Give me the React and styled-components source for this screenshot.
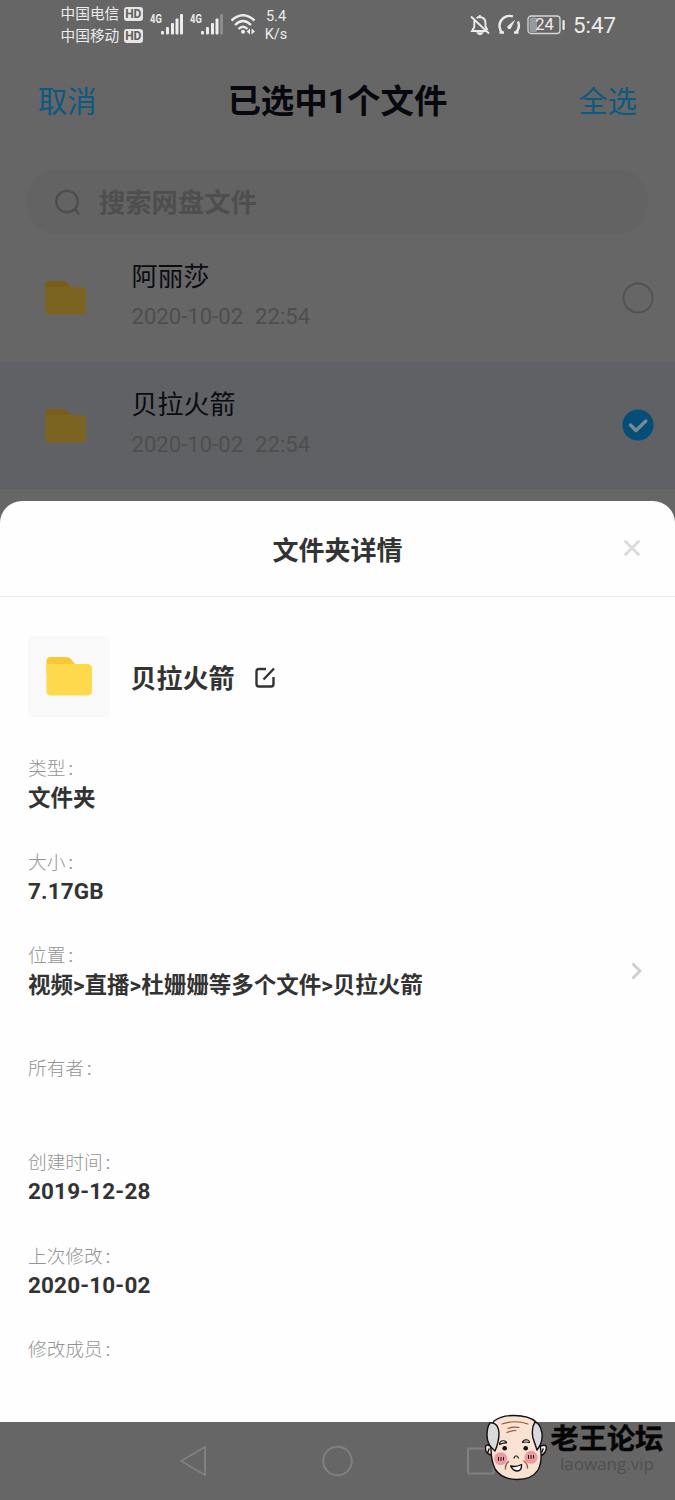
import React from 'react'
import styled, { createGlobalStyle } from 'styled-components';

const GlobalStyle = createGlobalStyle`
    * {
        box-sizing: border-box;
    }
    body {
        margin: 0;
        background: #666;
        font-family: Roboto, 'Noto Sans CJK SC', sans-serif;
    }
    svg {
        display: block;
        flex-shrink: 0;
    }
`

const files = [
    { name: '阿丽莎', date: '2020-10-02', time: '22:54', selected: false },
    { name: '贝拉火箭', date: '2020-10-02', time: '22:54', selected: true },
]

const details = [
    { label: '类型', value: '文件夹' },
    { label: '大小', value: '7.17GB', latin: true },
    { label: '位置', value: '视频>直播>杜姗姗等多个文件>贝拉火箭', height: 113, link: true },
    { label: '所有者', value: '' },
    { label: '创建时间', value: '2019-12-28', latin: true },
    { label: '上次修改', value: '2020-10-02', latin: true },
    { label: '修改成员', value: '' },
]

const Screen = styled.div`
    position: relative;
    display: flex;
    flex-direction: column;
    width: 675px;
    height: 1500px;
    overflow: hidden;
    background: #666;
`

const StatusBar = styled.div`
    display: flex;
    justify-content: space-between;
    height: 50px;
    padding: 0 60px 0 60.5px;
    color: #ececec;
`
const StatusGroup = styled.div`
    display: flex;
    align-items: center;
    height: 50px;
`
const StatusIcons = styled.div`
    display: flex;
    align-items: center;
    gap: 6px;
`
const Carriers = styled.div`
    display: flex;
    flex-direction: column;
    width: 89px;
`
const Carrier = styled.div`
    display: flex;
    align-items: center;
    gap: 4.5px;
    height: 22px;
    font-size: 14.7px;
    line-height: 22px;
    white-space: nowrap;
`
const HdBadge = styled.span`
    width: 19px;
    height: 14px;
    border-radius: 3px;
    background: #e6e6e6;
    color: #606060;
    font-size: 12px;
    font-weight: 700;
    line-height: 14.5px;
    text-align: center;
`
const Network = styled.div`
    display: flex;
    width: 40.5px;
    height: 22px;
`
const NetworkType = styled.span`
    width: 11px;
    font-size: 12.5px;
    font-weight: 700;
    line-height: 9px;
    transform: scaleX(0.75);
    transform-origin: left;
`
const Speed = styled.div`
    width: 30px;
    margin-left: 3.5px;
    padding-top: 2px;
    font-size: 14.5px;
    line-height: 18px;
    text-align: center;
`
const Clock = styled.div`
    width: 42px;
    margin-left: 8px;
    font-size: 22.3px;
    line-height: 50px;
    white-space: nowrap;
`

const TopBar = styled.div`
    display: flex;
    align-items: center;
    justify-content: space-between;
    height: 100px;
    padding: 4px 38px 0;
`
const TopAction = styled.button`
    padding: 0;
    border: none;
    background: none;
    color: #0e5980;
    font-family: inherit;
    font-size: 29.3px;
    line-height: 40px;
    cursor: pointer;
`
const TopTitle = styled.h1`
    margin: 0;
    color: #07080d;
    font-size: 33.5px;
    font-weight: 700;
    line-height: 48px;
`

const SearchBox = styled.div`
    display: flex;
    align-items: center;
    height: 64px;
    margin: 20px 27px 0;
    padding-left: 27px;
    border-radius: 30px;
    background: #636363;
    color: #4e4e4e;
`
const SearchText = styled.span`
    margin-left: 18px;
    padding-top: 2px;
    font-size: 26.3px;
    font-weight: 600;
    line-height: 38px;
`

const FileRow = styled.div`
    display: flex;
    align-items: center;
    height: 127.5px;
    padding: 0 21.5px 0 45px;
    background: ${props => props.$selected ? '#5f6164' : 'transparent'};
`
const FileText = styled.div`
    flex: 1;
    padding: 0 0 2px 45.5px;
`
const FileName = styled.div`
    color: #0b0c11;
    font-size: 26px;
    line-height: 40px;
`
const FileDate = styled.div`
    display: flex;
    gap: 12px;
    color: #4e4e4e;
    font-size: 22.1px;
    line-height: 39px;
`

const Sheet = styled.div`
    position: absolute;
    top: 500.5px;
    left: 0;
    width: 675px;
    height: 921.5px;
    border-radius: 22px 22px 0 0;
    background: #fefefe;
`
const SheetHeader = styled.div`
    display: grid;
    grid-template-columns: 1fr auto 1fr;
    align-items: center;
    height: 96.5px;
    padding: 0 34px;
    border-bottom: 1px solid #ebebeb;
`
const SheetTitle = styled.h2`
    grid-column: 2;
    margin: 0;
    padding-top: 5px;
    color: #333;
    font-size: 26px;
    font-weight: 700;
    line-height: 38px;
`
const CloseButton = styled.button`
    justify-self: end;
    padding: 0;
    border: none;
    background: none;
    cursor: pointer;
`
const FolderRow = styled.div`
    display: flex;
    align-items: center;
    padding: 39px 28px 0;
`
const Thumb = styled.div`
    display: flex;
    align-items: center;
    justify-content: center;
    width: 82px;
    height: 81px;
    padding-bottom: 1px;
    border-radius: 5px;
    background: #f9f9f9;
`
const FolderName = styled.div`
    margin: 0 20.5px;
    padding-top: 4px;
    color: #333;
    font-size: 26px;
    font-weight: 700;
    line-height: 38px;
`
const Details = styled.div`
    padding: 38px 28px 0;
`
const Detail = styled.div`
    display: flex;
    justify-content: space-between;
    height: ${props => props.$height || 93.7}px;
    padding-right: 4px;
`
const Label = styled.div`
    color: #949494;
    font-size: 18.7px;
    font-weight: 300;
    line-height: 29px;
`
const Colon = styled.span`
    margin-left: 3px;
    font-weight: 400;
`
const Value = styled.div`
    color: #333;
    font-size: 22.5px;
    font-weight: 700;
    letter-spacing: ${props => props.$latin ? '0.15px' : 'normal'};
    line-height: ${props => props.$latin ? '27px' : '29px'};
`
const Arrow = styled.div`
    padding-top: 20px;
`

const NavBar = styled.div`
    display: flex;
    align-items: center;
    justify-content: space-between;
    height: 78px;
    margin-top: auto;
    padding: 0 180px 0 179px;
`

const Watermark = styled.div`
    position: absolute;
    top: 1414px;
    left: 483px;
    display: flex;
    width: 190px;
`
const WatermarkText = styled.div`
    padding: 7px 0 0 1.5px;
    white-space: nowrap;
`
const SiteName = styled.div`
    color: #050505;
    font-size: 28.2px;
    font-weight: 700;
    line-height: 38px;
    -webkit-text-stroke: 0.4px #050505;
`
const SiteUrl = styled.div`
    padding-left: 9.5px;
    color: #505050;
    font-family: 'Open Sans', sans-serif;
    font-size: 17px;
    line-height: 10px;
`

const FolderIcon = ({ width, height, tab, body }) => (
    <svg width={width} height={height} viewBox="0 0 46 40" preserveAspectRatio="none">
        <path d="M0.500 5Q0.500 1 5 1H20Q23 1 25 3L28.500 7.500V18H0.500Z" fill={tab} />
        <path d="M0.500 8H41Q46 8 46 12.500V35Q46 39.500 41 39.500H5Q0.500 39.500 0.500 35.500Z" fill={body} />
    </svg>
)

const Signal = ({ weak }) => (
    <svg width="24" height="22" viewBox="0 0 24 22" fill="#ececec">
        <rect x="0" y="17" width="3" height="3.500" rx="1" />
        <rect x="5" y="13" width="3" height="7.500" rx="1" />
        <rect x="10" y="9" width="3" height="11.500" rx="1" />
        <rect x="14.500" y="4.500" width="3" height="16" rx="1" />
        <rect x="19" y="0" width="3" height="20.500" rx="1" fill={weak ? '#8c8c8c' : '#ececec'} />
    </svg>
)

const Wifi = () => (
    <svg width="27" height="22" viewBox="0 0 27 22" fill="none" stroke="#ececec" strokeWidth="2.400">
        <path d="M0.500 6.500Q12 -4 23.500 6.500M4 11Q12 3 20 11M7.500 15Q12 10.500 16.500 15" />
        <circle cx="12" cy="17.800" r="2" fill="#ececec" stroke="none" />
        <path d="M19 14.500V20.500L15.500 17.500ZM20.500 14.500V20.500L24 17.500Z" fill="#ececec" stroke="none" />
    </svg>
)

const BellOff = () => (
    <svg width="21" height="22" viewBox="0 0 21 22" fill="none" stroke="#ececec" strokeWidth="1.900">
        <path d="M4.300 6.500V13L2 17H16.500M6.500 4Q8 3 9.800 3Q15.500 3.500 15.500 9V12.500L17.500 16M9.800 3V1M1 2.500L19 19.500" />
        <path d="M8 19.200Q10 21.500 12 19.200Z" fill="#ececec" />
    </svg>
)

const Gauge = () => (
    <svg width="24" height="22" viewBox="0 0 24 22" fill="none" stroke="#ececec" strokeWidth="2.400">
        <path d="M5.500 19A10 10 0 0 1 16 2.500M21 7.500A10.500 10.500 0 0 1 18.500 19M2.500 18.500H7M17 18.500H21.500" />
        <path d="M18.300 5.500L13.800 14.500A2 2 0 0 1 10.500 12.300Z" fill="#ececec" stroke="none" />
    </svg>
)

const Battery = () => (
    <svg width="38" height="20" viewBox="0 0 38 20">
        <rect x="1" y="1" width="32" height="17.500" rx="3" fill="none" stroke="#d8d8d8" strokeWidth="1.300" />
        <rect x="2.500" y="2.500" width="7.500" height="14.500" rx="1.500" fill="#999" />
        <rect x="35.500" y="5" width="2.200" height="10" rx="1" fill="#ececec" />
        <text x="17.500" y="15" textAnchor="middle" fontSize="16.500" fill="#ececec">24</text>
    </svg>
)

const OldMan = () => (
    <svg width="66" height="68" viewBox="0 0 66 68" fill="none" stroke="#111" strokeWidth="1.400" strokeLinecap="round" strokeLinejoin="round">
        <path d="M9 33Q3 29 2.500 33Q2 41 10 41M6 35L5 38M56 33Q63 29 63.500 34Q62 42 55 42M60 35L59 38" fill="#fbeae2" />
        <path d="M11 7Q18 1.500 31 1.500Q46 1.500 53 8Q58 16 57 31Q60 47 55 56Q49 65.500 34 65.500Q19 65.500 12 55Q8 46 8 35Q3 20 11 7Z" fill="#fae2d3" />
        <path d="M7 9Q15 8 16 19Q16 28 12 37Q4 31 4 21Q4 13 7 9ZM52 8Q48 14 50 24L54 36Q60 29 59 19Q57 9 52 8Z" fill="#d9dadb" />
        <path d="M19 10Q32 5.500 45 10M25 14.500Q30 12.500 36 13.500M24 18.500Q28 16.500 33 16.500" stroke="#8d5b45" strokeWidth="1.200" />
        <circle cx="17.700" cy="44.700" r="6.500" fill="#ee9aa3" stroke="none" />
        <circle cx="48" cy="43.300" r="6.500" fill="#ee9aa3" stroke="none" />
        <path d="M15.500 43.500V46.500M18 43.500V46.500M20.500 43.500V46M45.500 41.500V44.500M48 41.500V44.500M50.500 41.500V44" strokeWidth="1" />
        <circle cx="21.700" cy="34.300" r="2.300" fill="#111" stroke="none" />
        <circle cx="42.700" cy="34.300" r="2.300" fill="#111" stroke="none" />
        <path d="M16.500 30.500Q17 26.500 20.500 26.800Q23.500 27 23.500 29Q20 28.500 16.500 30.500ZM39.500 28.500Q40 26 43 25.800Q46.500 26 46.500 28.500Q43 27.500 39.500 28.500Z" fill="#fff" strokeWidth="1.100" />
        <path d="M31 44Q33 39.500 35.500 44" strokeWidth="1.200" />
        <path d="M25.500 47.500Q22 50 22.500 55M41 47Q44.500 49.500 44.500 54" stroke="#9a5c43" />
        <path d="M27.700 52Q33 53.500 38.500 50.500Q39 57 34 57Q29.500 56.500 27.700 52Z" fill="#fff" />
    </svg>
)

const App = () => {
    return (
    <>
        <GlobalStyle />
        <Screen>
            <StatusBar>
                <StatusGroup>
                    <Carriers>
                        <Carrier>中国电信<HdBadge>HD</HdBadge></Carrier>
                        <Carrier>中国移动<HdBadge>HD</HdBadge></Carrier>
                    </Carriers>
                    <Network><NetworkType>4G</NetworkType><Signal /></Network>
                    <Network><NetworkType>4G</NetworkType><Signal weak /></Network>
                    <Wifi />
                    <Speed>5.4<br />K/s</Speed>
                </StatusGroup>
                <StatusGroup>
                    <StatusIcons>
                        <BellOff />
                        <Gauge />
                        <Battery />
                    </StatusIcons>
                    <Clock>5:47</Clock>
                </StatusGroup>
            </StatusBar>

            <TopBar>
                <TopAction>取消</TopAction>
                <TopTitle>已选中1个文件</TopTitle>
                <TopAction>全选</TopAction>
            </TopBar>

            <SearchBox>
                <svg width="27" height="27" viewBox="0 0 27 27" fill="none" stroke="#4e4e4e" strokeWidth="2.500" strokeLinecap="round">
                    <circle cx="13" cy="12.500" r="10.800" />
                    <path d="M21 20L24.500 24.500" />
                </svg>
                <SearchText>搜索网盘文件</SearchText>
            </SearchBox>

            {files.map(file => (
                <FileRow key={file.name} $selected={file.selected}>
                    <FolderIcon width={41} height={35} tab="#7b5d18" body="#7b6422" />
                    <FileText>
                        <FileName>{file.name}</FileName>
                        <FileDate><span>{file.date}</span><span>{file.time}</span></FileDate>
                    </FileText>
                    <svg width="32" height="32" viewBox="0 0 32 32" fill="none">
                        {file.selected ? (
                            <>
                                <circle cx="16" cy="16" r="15.600" fill="#044e78" />
                                <path d="M8.500 16L14 21.500L23.800 12" stroke="#7b8990" strokeWidth="3.400" strokeLinecap="round" strokeLinejoin="round" />
                            </>
                        ) : (
                            <circle cx="16" cy="16" r="14.500" stroke="#525252" strokeWidth="1.800" />
                        )}
                    </svg>
                </FileRow>
            ))}

            <NavBar>
                <svg width="28" height="32" viewBox="0 0 28 32" fill="none" stroke="#808080" strokeWidth="2" strokeLinejoin="round">
                    <path d="M26 2V30L2 16Z" />
                </svg>
                <svg width="32" height="32" viewBox="0 0 32 32" fill="none" stroke="#808080" strokeWidth="2">
                    <circle cx="16.500" cy="16" r="14.300" />
                </svg>
                <svg width="28" height="28" viewBox="0 0 28 28" fill="none" stroke="#808080" strokeWidth="2">
                    <rect x="1" y="1.500" width="25.500" height="25" rx="1" />
                </svg>
            </NavBar>

            <Sheet>
                <SheetHeader>
                    <SheetTitle>文件夹详情</SheetTitle>
                    <CloseButton>
                        <svg width="18" height="18" viewBox="0 0 18 18" fill="none" stroke="#dcdcdc" strokeWidth="3" strokeLinecap="round">
                            <path d="M2.500 2.500L15.500 15.500M15.500 2.500L2.500 15.500" />
                        </svg>
                    </CloseButton>
                </SheetHeader>
                <FolderRow>
                    <Thumb>
                        <FolderIcon width={46} height={40} tab="#fac832" body="#ffd94c" />
                    </Thumb>
                    <FolderName>贝拉火箭</FolderName>
                    <svg width="21" height="22" viewBox="0 0 21 22" fill="none" stroke="#333" strokeWidth="2.400">
                        <path d="M11 3H4Q1.500 3 1.500 5.500V18Q1.500 20.500 4 20.500H16Q18.500 20.500 18.500 18V11M19 2.500L8.500 13.500" />
                    </svg>
                </FolderRow>
                <Details>
                    {details.map(item => (
                        <Detail key={item.label} $height={item.height}>
                            <div>
                                <Label>{item.label}<Colon>:</Colon></Label>
                                <Value $latin={item.latin}>{item.value}</Value>
                            </div>
                            {item.link && (
                                <Arrow>
                                    <svg width="12" height="18" viewBox="0 0 12 18" fill="none" stroke="#cfcfcf" strokeWidth="2.800">
                                        <path d="M1.500 1.500L9 9L1.500 16.500" />
                                    </svg>
                                </Arrow>
                            )}
                        </Detail>
                    ))}
                </Details>
            </Sheet>

            <Watermark>
                <OldMan />
                <WatermarkText>
                    <SiteName>老王论坛</SiteName>
                    <SiteUrl>laowang.vip</SiteUrl>
                </WatermarkText>
            </Watermark>
        </Screen>
    </>
  )
}

export default App
